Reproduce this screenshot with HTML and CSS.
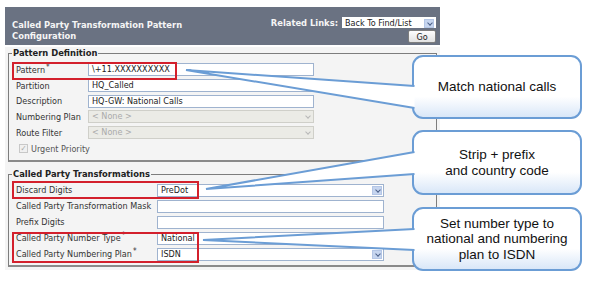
FILE: index.html
```html
<!DOCTYPE html>
<html lang="en">
<head>
  <meta charset="UTF-8">
  <title>Called Party Transformation Pattern Configuration</title>
  <link rel="stylesheet" href="styles.css">
</head>
<body>
  <div class="stage">
    <div class="config">
      <div class="titlebar">
        <h1>Called Party Transformation Pattern<br>Configuration</h1>
        <div class="links">
          <div class="links-row">
            <span class="links-label">Related Links:</span>
            <span class="field select related">Back To Find/List<i class="arrow"></i></span>
          </div>
          <button class="go">Go</button>
        </div>
      </div>

      <div class="panel">
        <fieldset class="group group-pattern">
          <legend>Pattern Definition</legend>
          <div class="row"><label>Pattern<sup>*</sup></label><span class="field">\+11.XXXXXXXXXX</span></div>
          <div class="row"><label>Partition</label><span class="field">HQ_Called</span></div>
          <div class="row"><label>Description</label><span class="field">HQ-GW: National Calls</span></div>
          <div class="row"><label>Numbering Plan</label><span class="field select disabled">&lt; None &gt;<i class="arrow"></i></span></div>
          <div class="row"><label>Route Filter</label><span class="field select disabled">&lt; None &gt;<i class="arrow"></i></span></div>
          <div class="check-row"><span class="checkbox">&#10003;</span>Urgent Priority</div>
        </fieldset>

        <fieldset class="group group-transform">
          <legend>Called Party Transformations</legend>
          <div class="row"><label>Discard Digits</label><span class="field select">PreDot<i class="arrow"></i></span></div>
          <div class="row"><label>Called Party Transformation Mask</label><span class="field"></span></div>
          <div class="row"><label>Prefix Digits</label><span class="field"></span></div>
          <div class="row"><label>Called Party Number Type<sup>*</sup></label><span class="field select">National<i class="arrow"></i></span></div>
          <div class="row"><label>Called Party Numbering Plan<sup>*</sup></label><span class="field select">ISDN<i class="arrow"></i></span></div>
        </fieldset>
      </div>
    </div>

    <!-- highlight boxes -->
    <div class="mark mark-pattern"></div>
    <div class="mark mark-discard"></div>
    <div class="mark mark-type"></div>

    <!-- callout pointers -->
    <svg class="tails" width="591" height="286" viewBox="0 0 591 286">
      <path d="M414.5 86 L186 70 L414.5 108" />
      <path d="M414.5 152 L206 189 L414.5 174" />
      <path d="M414.5 229 L203 240 L414.5 250" />
    </svg>

    <div class="callout callout-match">Match national calls</div>
    <div class="callout callout-strip">Strip + prefix<br>and country code</div>
    <div class="callout callout-type">Set number type to<br>national and numbering<br>plan to ISDN</div>
  </div>
</body>
</html>
```

FILE: styles.css
```css
body {
  margin: 0;
  background: #fff;
  font-family: 'DejaVu Sans Condensed', 'DejaVu Sans', sans-serif;
  font-size: 9px;
  color: #333;
}

.stage {
  position: relative;
  width: 591px;
  height: 286px;
  overflow: hidden;
}

.config {
  margin: 7px 0 0 5px;
  width: 435px;
}

/* header bar */
.titlebar {
  height: 38px;
  background: #6a7282;
  display: flex;
  justify-content: space-between;
  padding: 0 4px 0 7px;
  box-sizing: border-box;
}

h1 {
  margin: 0;
  padding-top: 13px;
  font-size: 9.3px;
  line-height: 10.5px;
  font-weight: bold;
  color: #f5f5f5;
}

.links {
  display: flex;
  flex-direction: column;
  align-items: flex-end;
  gap: 2px;
  padding-top: 10px;
}

.links-row {
  display: flex;
  align-items: center;
  gap: 4px;
}

.links-label {
  font-weight: bold;
  font-size: 9.3px;
  color: #f5f5f5;
}

.go {
  width: 28px;
  height: 13px;
  padding: 0;
  font-family: inherit;
  font-size: 9px;
  color: #222;
  background: linear-gradient(#fdfdfd, #e2e2e2);
  border: 1px solid #7e7e7e;
  border-radius: 2px;
}

/* form panel */
.panel {
  background: #f4f4f4;
  padding: 0 3px 3px;
}

.group {
  margin: 0;
  padding: 3px 7px 3px;
  border: 1px solid #7d7d7d;
  border-bottom: 2px solid #8a8a8a;
  min-width: 0;
}

.group-pattern {
  margin-top: 2px;
}

.group-transform {
  margin-top: 6px;
  padding-top: 2px;
}

legend {
  margin-left: -4px;
  padding: 0 1px;
  font-weight: bold;
  font-size: 9.3px;
  line-height: 12px;
  color: #222;
}

.row {
  display: grid;
  grid-template-columns: 72px 226px;
  align-items: center;
  height: 15.7px;
}

.group-transform .row {
  grid-template-columns: 141px 227px;
  height: 16px;
}

label {
  white-space: nowrap;
}

sup {
  font-size: 8px;
  line-height: 0;
  vertical-align: 3px;
  margin-left: 1px;
}

.field {
  position: relative;
  display: block;
  height: 13px;
  box-sizing: border-box;
  border: 1px solid #9fb3cf;
  background: #fff;
  padding: 0 3px;
  line-height: 11px;
  color: #222;
  white-space: nowrap;
}

.select .arrow {
  position: absolute;
  right: 1px;
  top: 1px;
  width: 10px;
  height: 9px;
  background: #c6d5ef;
  border: 1px solid #b4c6e6;
  box-sizing: border-box;
}

.select .arrow::after {
  content: '';
  position: absolute;
  left: 2.5px;
  top: 1px;
  width: 3px;
  height: 3px;
  border-right: 1.5px solid #4a5f88;
  border-bottom: 1.5px solid #4a5f88;
  transform: rotate(45deg);
}

.field.disabled {
  background: #ebebe6;
  border-color: #cfcfc9;
  color: #aaa;
}

.disabled .arrow {
  background: #ebebe6;
  border-color: #ebebe6;
}

.disabled .arrow::after {
  border-color: #b8b8b8;
}

.field.related {
  width: 94px;
  height: 11px;
  line-height: 10px;
  border-color: #fff;
  padding: 0 2px;
}

.check-row {
  display: flex;
  align-items: center;
  gap: 3px;
  height: 17px;
  padding-left: 3px;
  color: #555;
}

.checkbox {
  width: 9px;
  height: 9px;
  box-sizing: border-box;
  border: 1px solid #c8c8c8;
  background: #f0f0f0;
  color: #a5a5a5;
  font-size: 8px;
  line-height: 8px;
  text-align: center;
}

/* red highlight boxes */
.mark {
  position: absolute;
  border: 2px solid #d3202c;
  box-sizing: border-box;
}

.mark-pattern {
  left: 12px;
  top: 62px;
  width: 165px;
  height: 18px;
}

.mark-discard {
  left: 12px;
  top: 181px;
  width: 187px;
  height: 18px;
}

.mark-type {
  left: 12px;
  top: 232px;
  width: 187px;
  height: 31px;
}

/* callouts */
.tails {
  position: absolute;
  left: 0;
  top: 0;
  z-index: 2;
}

.tails path {
  fill: #fff;
  stroke: #6b9dd5;
  stroke-width: 2;
  stroke-linejoin: miter;
}

.callout {
  position: absolute;
  left: 412px;
  width: 170px;
  box-sizing: border-box;
  border: 2px solid #6b9dd5;
  border-radius: 11px;
  background: linear-gradient(#fff 66%, #d9e7f8);
  display: flex;
  align-items: center;
  justify-content: center;
  text-align: center;
  font-family: 'Liberation Sans', Arial, sans-serif;
  font-size: 13.5px;
  line-height: 15.5px;
  color: #111;
}

.callout-match {
  top: 55px;
  height: 64px;
}

.callout-strip {
  top: 130px;
  height: 65px;
}

.callout-type {
  top: 207px;
  height: 64px;
}
```
